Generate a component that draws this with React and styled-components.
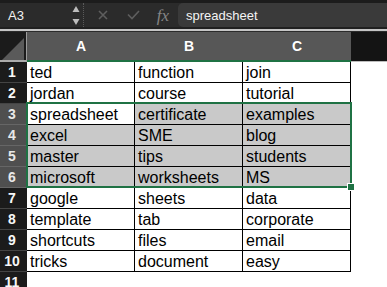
import React from 'react';
import styled, { createGlobalStyle } from 'styled-components';

const Global = createGlobalStyle`
  html, body { margin: 0; padding: 0; background: #fff; }
  body { font-family: "Liberation Sans", Arial, sans-serif; overflow: hidden; }
`;

const Window = styled.div`
  width: 387px;
  height: 287px;
  overflow: hidden;
  display: flex;
  flex-direction: column;
  background: #fff;
`;

const Toolbar = styled.div`
  height: 29px;
  flex-shrink: 0;
  box-sizing: border-box;
  border-top: 3px solid #1c1c1c;
  border-bottom: 2px solid #202020;
  background: #2b2b2b;
  display: flex;
  align-items: stretch;
`;

const NameBox = styled.div`
  width: 68px;
  box-sizing: border-box;
  padding: 2px 0 0 8px;
  color: #f2f2f2;
  font-size: 13px;
  line-height: 22px;
`;

const Spinner = styled.div`
  width: 15px;
  display: flex;
  align-items: center;
  justify-content: center;
`;

const DottedSep = styled.div`
  width: 0;
  border-left: 1px dotted #5a5a5a;
  margin-right: 4px;
`;

const ToolButton = styled.div`
  width: 30px;
  display: flex;
  align-items: center;
  justify-content: center;
  color: ${(p) => p.$color || '#5c5c5c'};
`;

const Fx = styled.span`
  font-family: "Liberation Serif", "Times New Roman", serif;
  font-style: italic;
  font-size: 17px;
  color: #858585;
  padding-top: 1px;
`;

const FormulaBox = styled.div`
  flex: 1;
  background: #3a3a3a;
  border-radius: 5px 0 0 5px;
  box-sizing: border-box;
  padding: 2px 0 0 8px;
  color: #f4f4f4;
  font-size: 13px;
  line-height: 22px;
`;

const Rule = styled.div`
  height: 2px;
  flex-shrink: 0;
  background: #c5c5c5;
`;

const Sheet = styled.div`
  position: relative;
  border-top: 1px solid #2b2b2b;
  display: grid;
  grid-template-columns: 27px repeat(3, 108px) 1fr;
  grid-template-rows: 30px repeat(11, 21px);
`;

const Corner = styled.div`
  background: #1b1b1b;
  box-sizing: border-box;
  border-right: 1px solid #9c9c9c;
  border-bottom: 2px solid #ababab;
  display: flex;
  align-items: flex-end;
  justify-content: flex-end;
  padding: 0 2px 0 0;
`;

const ColHeader = styled.div`
  background: #575757;
  box-sizing: border-box;
  border-bottom: 2px solid #1f7244;
  color: #fff;
  font-size: 14px;
  font-weight: bold;
  display: flex;
  align-items: center;
  justify-content: center;
`;

const HeaderFill = styled.div`
  background: #141414;
  box-sizing: border-box;
  border-bottom: 1px solid #bdbdbd;
`;

const RowHeader = styled.div`
  background: ${(p) => (p.$selected ? '#4f4f4f' : '#1b1b1b')};
  color: ${(p) => (p.$selected ? '#e8e8e8' : '#f7f7f7')};
  box-sizing: border-box;
  border-bottom: 1px solid ${(p) => (p.$selected ? '#666' : '#444')};
  font-size: 14px;
  font-weight: bold;
  display: flex;
  align-items: center;
  justify-content: center;
  padding-right: 3px;
`;

const Cell = styled.div`
  background: ${(p) => (p.$shaded ? '#c9c9c9' : '#fff')};
  box-sizing: border-box;
  border-right: 1px solid #000;
  border-bottom: 1px solid #000;
  color: #000;
  font-size: 16px;
  line-height: 18px;
  padding: 2px 0 0 3px;
  white-space: nowrap;
  overflow: hidden;
`;

const Blank = styled.div`
  background: #fff;
  grid-column: ${(p) => p.$span || 'auto'};
`;

const Selection = styled.div`
  position: absolute;
  left: 26px;
  top: 70px;
  width: 326px;
  height: 86px;
  box-sizing: border-box;
  border: 2px solid #1f7244;
  pointer-events: none;
`;

const Handle = styled.div`
  position: absolute;
  right: -4px;
  bottom: -4px;
  width: 6px;
  height: 6px;
  box-sizing: border-box;
  background: #1f7244;
  outline: 1px solid #fff;
`;

const data = [
  ['ted', 'function', 'join'],
  ['jordan', 'course', 'tutorial'],
  ['spreadsheet', 'certificate', 'examples'],
  ['excel', 'SME', 'blog'],
  ['master', 'tips', 'students'],
  ['microsoft', 'worksheets', 'MS'],
  ['google', 'sheets', 'data'],
  ['template', 'tab', 'corporate'],
  ['shortcuts', 'files', 'email'],
  ['tricks', 'document', 'easy'],
];

export default function App() {
  return (
    <Window>
      <Global />
      <Toolbar>
        <NameBox>A3</NameBox>
        <Spinner>
          <svg width="8" height="19" viewBox="0 0 8 19">
            <polygon points="4,0 7.5,6 0.5,6" fill="#bdbdbd" />
            <polygon points="0.5,13 7.5,13 4,19" fill="#bdbdbd" />
          </svg>
        </Spinner>
        <DottedSep />
        <ToolButton>
          <svg width="10" height="10" viewBox="0 0 10 10">
            <path d="M1 1 L9 9 M9 1 L1 9" stroke="#5e5e5e" strokeWidth="1.6" fill="none" />
          </svg>
        </ToolButton>
        <ToolButton>
          <svg width="13" height="10" viewBox="0 0 13 10">
            <path d="M1 4.5 L5 8.5 L12 1" stroke="#5e5e5e" strokeWidth="1.6" fill="none" />
          </svg>
        </ToolButton>
        <ToolButton>
          <Fx>fx</Fx>
        </ToolButton>
        <FormulaBox>spreadsheet</FormulaBox>
      </Toolbar>
      <Rule />
      <Sheet>
        <Corner>
          <svg width="22" height="22" viewBox="0 0 22 22">
            <polygon points="0,22 22,0 22,22" fill="#5a5a5a" />
          </svg>
        </Corner>
        <ColHeader>A</ColHeader>
        <ColHeader>B</ColHeader>
        <ColHeader>C</ColHeader>
        <HeaderFill />
        {data.map((row, r) => {
          const inSel = r >= 2 && r <= 5;
          return (
            <React.Fragment key={r}>
              <RowHeader $selected={inSel}>{r + 1}</RowHeader>
              {row.map((v, c) => (
                <Cell key={c} $shaded={inSel && !(r === 2 && c === 0)}>
                  {v}
                </Cell>
              ))}
              <Blank />
            </React.Fragment>
          );
        })}
        <RowHeader>11</RowHeader>
        <Blank $span="span 4" />
        <Selection>
          <Handle />
        </Selection>
      </Sheet>
    </Window>
  );
}
